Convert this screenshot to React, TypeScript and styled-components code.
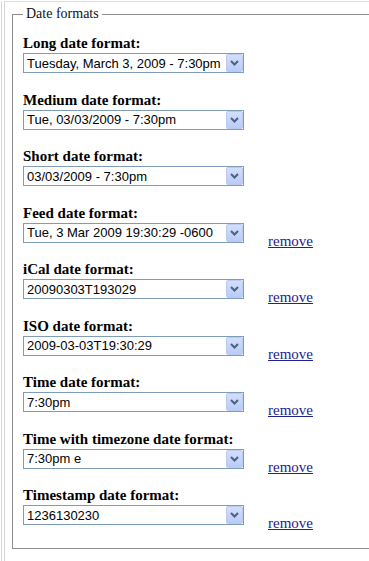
import styled, { createGlobalStyle } from 'styled-components';

const GlobalStyle = createGlobalStyle`
  html, body {
    margin: 0;
    padding: 0;
    background: #ffffff;
    overflow: hidden;
  }
  body {
    font-family: "Liberation Serif", "Times New Roman", serif;
    color: #000;
  }
`;

const Page = styled.div`
  margin-left: 1px;
  min-height: 100vh;
  border-left: 1px solid #d8d8d8;
`;

const Frame = styled.div`
  margin-left: 2px;
  margin-top: 1px;
  min-height: calc(100vh - 1px);
  border-left: 1px solid #d8d8d8;
  border-top: 1px solid #dcdcdc;
  padding: 4px 0 0 7px;
  box-sizing: border-box;
`;

const Fieldset = styled.fieldset`
  margin: 0;
  border: 1px solid #8c8c8c;
  border-right: 0;
  padding: 13px 10px 4px 10px;
  box-sizing: border-box;
`;

const Legend = styled.legend`
  font-size: 14px;
  line-height: 16px;
  padding: 0 3px;
  color: #111;
`;

const Item = styled.div`
  margin-bottom: 18.5px;
`;

const Label = styled.label`
  display: block;
  font-weight: bold;
  font-size: 15px;
  line-height: 17px;
  margin-bottom: 1px;
`;

const Row = styled.div`
  display: flex;
  align-items: flex-start;
  height: 20px;
`;

const SelectWrap = styled.div`
  position: relative;
  width: 221px;
  height: 20px;
`;

const Select = styled.select`
  appearance: none;
  -webkit-appearance: none;
  width: 100%;
  height: 100%;
  margin: 0;
  border: 1px solid #7f9db9;
  border-radius: 0;
  background: #fff;
  padding: 0 20px 0 3px;
  font-family: "Liberation Sans", Arial, sans-serif;
  font-size: 13px;
  color: #000;
  box-sizing: border-box;
  outline: none;
`;

const Arrow = styled.span`
  position: absolute;
  right: 1px;
  top: 1px;
  width: 15px;
  height: 16px;
  border: 1px solid #b9cbf3;
  border-radius: 2px;
  background: linear-gradient(#d3defb, #b9ccf6);
  display: flex;
  align-items: center;
  justify-content: center;
  pointer-events: none;
`;

const RemoveLink = styled.a`
  margin-left: 24px;
  margin-top: 10px;
  font-size: 15px;
  line-height: 17px;
  color: #23238f;
  text-decoration: underline;
  white-space: nowrap;
`;

type Format = {
  label: string;
  value: string;
  removable?: boolean;
};

const formats: Format[] = [
  { label: 'Long date format:', value: 'Tuesday, March 3, 2009 - 7:30pm' },
  { label: 'Medium date format:', value: 'Tue, 03/03/2009 - 7:30pm' },
  { label: 'Short date format:', value: '03/03/2009 - 7:30pm' },
  { label: 'Feed date format:', value: 'Tue, 3 Mar 2009 19:30:29 -0600', removable: true },
  { label: 'iCal date format:', value: '20090303T193029', removable: true },
  { label: 'ISO date format:', value: '2009-03-03T19:30:29', removable: true },
  { label: 'Time date format:', value: '7:30pm', removable: true },
  { label: 'Time with timezone date format:', value: '7:30pm e', removable: true },
  { label: 'Timestamp date format:', value: '1236130230', removable: true },
];

const Chevron = () => (
  <svg width="9" height="6" viewBox="0 0 9 6">
    <polyline points="1,1 4.5,4.5 8,1" fill="none" stroke="#4d6185" strokeWidth="2" />
  </svg>
);

const App = () => {
  return (
    <>
      <GlobalStyle />
      <Page>
        <Frame>
          <Fieldset>
            <Legend>Date formats</Legend>
            {formats.map((f) => (
              <Item key={f.label}>
                <Label>{f.label}</Label>
                <Row>
                  <SelectWrap>
                    <Select defaultValue={f.value}>
                      <option>{f.value}</option>
                    </Select>
                    <Arrow>
                      <Chevron />
                    </Arrow>
                  </SelectWrap>
                  {f.removable && <RemoveLink href="#">remove</RemoveLink>}
                </Row>
              </Item>
            ))}
          </Fieldset>
        </Frame>
      </Page>
    </>
  );
};

export default App;
